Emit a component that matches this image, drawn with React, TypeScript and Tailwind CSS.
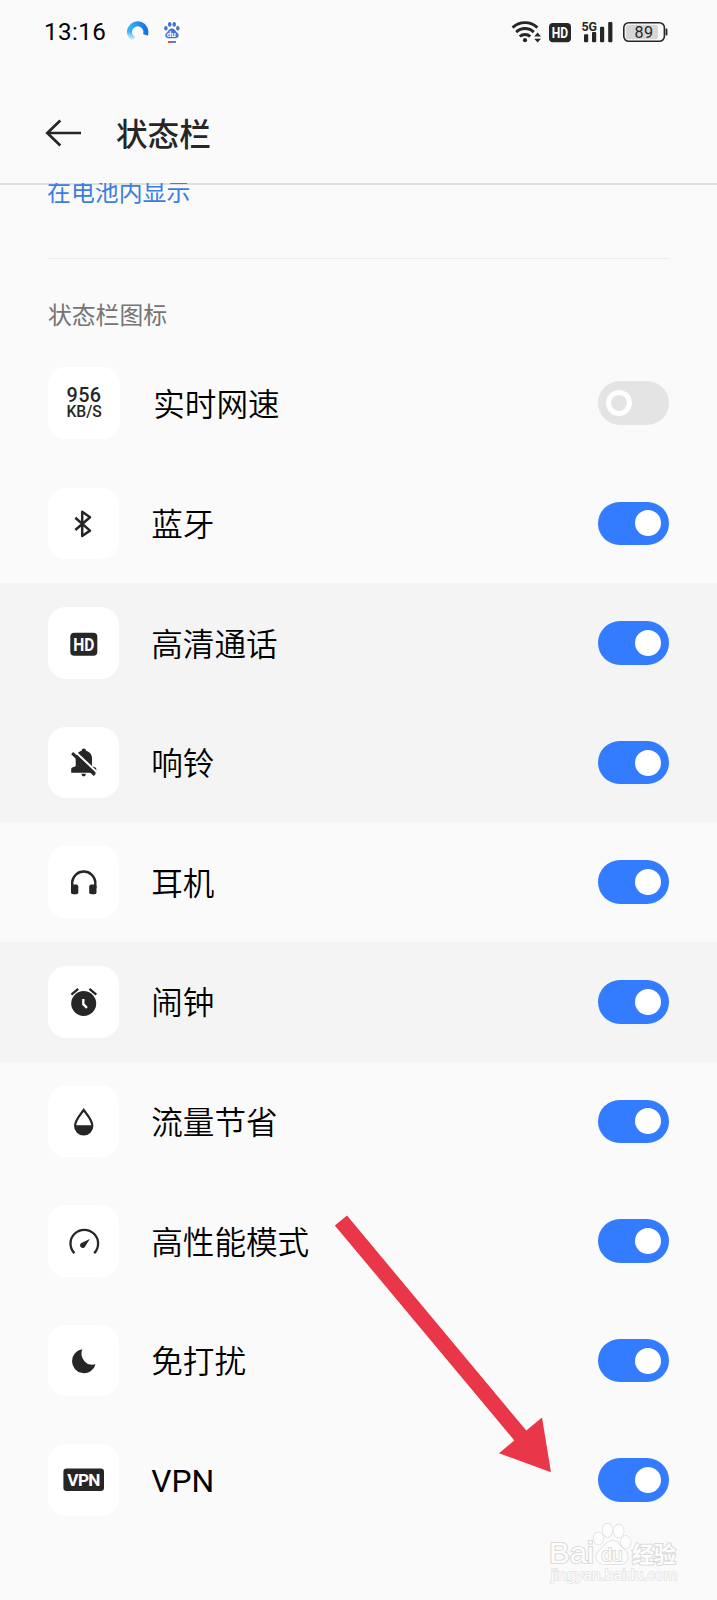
import React from "react";

const INK = "#262626";
const FONT = "font-['Roboto','Noto_Sans_CJK_SC',sans-serif]";

function Tile({ children }: { children: React.ReactNode }) {
  return (
    <div className="size-[71.5px] shrink-0 rounded-[18px] bg-white">
      <svg viewBox="0 0 71.5 71.5" className="size-full" fill={INK}>
        {children}
      </svg>
    </div>
  );
}

const stroke = { fill: "none", stroke: INK } as const;

const items = [
  {
    label: "实时网速",
    on: false,
    icon: (
      <g fontFamily="Roboto" fontWeight="500">
        <text x="18.6" y="35.2" fontSize="19.8" textLength="34.4">956</text>
        <text x="18.4" y="50.3" fontSize="15.8" textLength="35.4" lengthAdjust="spacingAndGlyphs">KB/S</text>
      </g>
    ),
  },
  {
    label: "蓝牙",
    on: true,
    icon: <path d="M27.3 29.8 L42 42.6 L34.2 48 V23.8 L42 29.2 L27.3 42" {...stroke} strokeWidth="2.5" strokeLinejoin="round" />,
  },
  {
    label: "高清通话",
    on: true,
    icon: (
      <>
        <rect x="22.3" y="25.7" width="27" height="23" rx="4" />
        <text x="25.3" y="43.6" fontSize="18.2" fontFamily="Roboto" fontWeight="700" fill="#fff" textLength="21.2" lengthAdjust="spacingAndGlyphs">HD</text>
      </>
    ),
  },
  {
    label: "响铃",
    on: true,
    icon: (
      <>
        <path d="M33.6 23.8 a2.2 2.2 0 0 1 4.4 0 C42 24.8 44 28 44 31.5 V39.2 L47.5 40.5 Q48.3 41 48.3 42 V45.7 H23.2 V42 Q23.2 40.8 24.2 40.4 L27.7 39.2 V31.5 C27.7 28 29.8 24.8 33.6 23.8Z" />
        <path d="M33.3 46.8 H38 Q37.6 49.4 35.7 49.4 Q33.8 49.4 33.3 46.8Z" />
        <path d="M25.4 23 L49 45.2" stroke="#fff" strokeWidth="2" />
        <path d="M24.2 26.2 L46.8 47.8" stroke={INK} strokeWidth="3" />
      </>
    ),
  },
  {
    label: "耳机",
    on: true,
    icon: (
      <>
        <path d="M24.2 42 V35.9 a11.6 11.4 0 0 1 23.1 0 V42" {...stroke} strokeWidth="2.4" />
        <rect x="23" y="38.5" width="7.3" height="9.8" rx="2" />
        <rect x="41.2" y="38.5" width="7.3" height="9.8" rx="2" />
      </>
    ),
  },
  {
    label: "闹钟",
    on: true,
    icon: (
      <>
        <circle cx="35.7" cy="37.5" r="12.5" />
        <path d="M35.3 33 V38.2 L39 41.8" fill="none" stroke="#fff" strokeWidth="2.4" />
        <path d="M23.4 28.6 L30.2 22.9 M41.4 22.9 L48.3 28.6" {...stroke} strokeWidth="2.4" />
      </>
    ),
  },
  {
    label: "流量节省",
    on: true,
    icon: (
      <>
        <path d="M35.7 24 C32 29.2 27.1 34 27.1 39.8 a8.6 8.6 0 0 0 17.2 0 C44.3 34 39.4 29.2 35.7 24Z" {...stroke} strokeWidth="2.2" />
        <path d="M27 39.3 H44.5 a8.7 9 0 0 1 -17.5 0Z" />
      </>
    ),
  },
  {
    label: "高性能模式",
    on: true,
    icon: (
      <>
        <path d="M26.4 48.2 a13.8 13.8 0 1 1 19.8 0" {...stroke} strokeWidth="2.3" />
        <path d="M41.8 34.1 L37.2 41.4 A2.7 2.7 0 1 1 33.4 38Z" />
      </>
    ),
  },
  {
    label: "免打扰",
    on: true,
    icon: <path d="M34.3 24.3 A12 12 0 1 0 47.6 39.3 A11.2 11.2 0 0 1 34.3 24.3Z" />,
  },
  {
    label: "VPN",
    on: true,
    icon: (
      <>
        <rect x="15.4" y="24.4" width="40.6" height="22.6" rx="3.3" />
        <text x="19.3" y="42.1" fontSize="17.2" fontFamily="Roboto" fontWeight="700" fill="#fff" textLength="33.2">VPN</text>
      </>
    ),
  },
];

// rows that are tinted in the list
const tinted = ["高清通话", "响铃", "闹钟"];

function Switch({ on }: { on: boolean }) {
  return on ? (
    <div className="flex h-[43.6px] w-[71.8px] items-center justify-end rounded-full bg-[#337cff] pr-[8.5px]">
      <div className="size-[26px] rounded-full bg-white" />
    </div>
  ) : (
    <div className="flex h-[43.6px] w-[71.8px] items-center rounded-full bg-[#e4e4e4] pl-[8.5px]">
      <div className="size-[26px] rounded-full border-[5.3px] border-white" />
    </div>
  );
}

function StatusBar() {
  return (
    <div className="flex h-16 items-center pl-[44px] pr-[49px]">
      <span className="w-16 whitespace-nowrap text-[24.2px] font-[450] leading-8 tracking-[0.4px]">13:16</span>
      <svg width="24" height="24" viewBox="125 20 24 24" className="ml-[17px] shrink-0">
        <defs>
          <linearGradient id="ring" x1="0" y1="0" x2="1" y2="0">
            <stop offset="0" stopColor="#35b4f2" />
            <stop offset="1" stopColor="#1673e0" />
          </linearGradient>
          <linearGradient id="fade" x1="0" y1="0" x2="0" y2="1">
            <stop offset="0.5" stopColor="#fafafa" stopOpacity="0" />
            <stop offset="0.95" stopColor="#fafafa" />
          </linearGradient>
        </defs>
        <path d="M134 39.3 A8.2 8.2 0 1 1 145.4 34.8" fill="none" stroke="url(#ring)" strokeWidth="5" />
        <rect x="125" y="20" width="15" height="22" fill="url(#fade)" />
      </svg>
      <svg width="18" height="24" viewBox="163 21 18 24" className="ml-[14px] shrink-0" fill="#4672d2">
        <rect x="163" y="21" width="18" height="24" fill="#fff" rx="3" />
        <ellipse cx="165.9" cy="29.2" rx="1.7" ry="2.3" />
        <ellipse cx="169.7" cy="25.4" rx="1.8" ry="2.4" />
        <ellipse cx="174.2" cy="25.4" rx="1.8" ry="2.4" />
        <ellipse cx="177.8" cy="29.2" rx="1.7" ry="2.3" />
        <path d="M172 29.4 C175 29.4 175.6 32.4 177.3 33.8 C180 36.2 178.4 39.2 175.6 39.2 H168.2 C165.2 39.2 164.2 36 166.5 33.8 C168.4 32.2 169 29.4 172 29.4Z" />
        <text x="166.8" y="38" fontSize="8" fontWeight="700" fontFamily="Roboto" fill="#fff">du</text>
        <path d="M168 43 H172" stroke="#d83a35" strokeWidth="1.8" />
        <path d="M172 43 H176" stroke="#4672d2" strokeWidth="1.8" />
      </svg>

      <div className="ml-auto flex items-center">
        <svg width="31" height="24" viewBox="511 20 31 24" fill={INK}>
          <g fill="none" stroke={INK} strokeWidth="2.9">
            <path d="M512.6 27.6 A18 18 0 0 1 537.4 27.6" />
            <path d="M516.2 32.1 A12.6 12.6 0 0 1 533.8 32.1" />
            <path d="M519.8 36.5 A7.6 7.6 0 0 1 530.2 36.5" />
          </g>
          <circle cx="525" cy="40.2" r="2.1" />
          <path d="M537.6 32.6 L541 36.4 H534.2Z M537.6 42.4 L541 38.8 H534.2Z" />
        </svg>
        <svg width="22" height="24" viewBox="549 20 22 24" className="ml-[7px]">
          <rect x="549" y="23" width="22" height="19.2" rx="4" fill={INK} />
          <text x="551.8" y="38" fontSize="14.6" fontFamily="Roboto" fontWeight="700" fill="#fff" textLength="16.4" lengthAdjust="spacingAndGlyphs">HD</text>
        </svg>
        <svg width="32" height="26" viewBox="581 19 32 26" className="ml-[10px]" fill={INK}>
          <text x="581.4" y="31" fontSize="13.4" fontFamily="Roboto" fontWeight="700" textLength="15.6" lengthAdjust="spacingAndGlyphs">5G</text>
          <rect x="584" y="34.2" width="4.2" height="8" rx="1" />
          <rect x="592" y="32" width="4.2" height="10.2" rx="1" />
          <rect x="600" y="26.7" width="4.2" height="15.5" rx="1" />
          <rect x="608.2" y="22" width="4.2" height="20.2" rx="1" />
        </svg>
        <svg width="45" height="24" viewBox="623 20 45 24" className="ml-[10px]">
          <rect x="623.8" y="22.7" width="40.6" height="18.6" rx="5" fill="none" stroke={INK} strokeWidth="1.6" />
          <rect x="626" y="24.8" width="32" height="14.4" rx="2.5" fill="#d6d6d6" />
          <rect x="665.6" y="28.6" width="1.8" height="7" rx="0.8" fill={INK} />
          <text x="634.4" y="38" fontSize="16.2" fontFamily="Roboto" fill={INK} textLength="18.6">89</text>
        </svg>
      </div>
    </div>
  );
}

function Watermark() {
  return (
    <svg className="absolute left-[545px] top-[1518px]" width="140" height="70" viewBox="545 1518 140 70" fill="#fdfdfd" stroke="#dadada" strokeWidth="1.3" paintOrder="stroke">
      <g fontFamily="Liberation Sans, Noto Sans CJK SC" fontWeight="700" strokeWidth="2">
        <text x="549" y="1563" fontSize="29" fontWeight="400" textLength="45" lengthAdjust="spacingAndGlyphs">Bai</text>
        <text x="632" y="1561.5" fontSize="22" textLength="44">经验</text>
      </g>
      <ellipse cx="598.3" cy="1538.5" rx="4.8" ry="6.2" />
      <ellipse cx="607.5" cy="1530.3" rx="5" ry="6.8" />
      <ellipse cx="618.8" cy="1531" rx="5" ry="6.6" />
      <ellipse cx="625.8" cy="1542" rx="5" ry="6.2" />
      <path d="M612.5 1541 C618 1541 620 1546 624 1549.5 C631 1556 627.5 1564 620 1564 H605 C596 1564 593.5 1556 599.5 1550.5 C604.5 1546 607 1541 612.5 1541Z" />
      <text x="601.5" y="1560.5" fontSize="19" fontFamily="Liberation Sans" strokeWidth="1.8" textLength="21">du</text>
      <text x="551" y="1580" fontSize="15" fontFamily="Liberation Sans" strokeWidth="1.4" stroke="#e2e2e2" textLength="126" lengthAdjust="spacingAndGlyphs">jingyan.baidu.com</text>
    </svg>
  );
}

export default function App() {
  return (
    <div className={`relative h-[1600px] w-[717px] overflow-hidden bg-[#fafafa] text-black ${FONT}`}>
      <header className="h-[184.5px] border-b-2 border-[#dfdfdf]">
        <StatusBar />
        <div className="flex h-[138px] items-center pl-[45px]">
          <svg width="36" height="28" viewBox="0 0 36 28" fill="none" stroke={INK} strokeWidth="2.7">
            <path d="M15.3 1.6 L2.3 14 L15.3 26.4 M2.3 14 H36" />
          </svg>
          <h1 className="ml-[35px] pt-[5px] text-[31.6px] font-medium leading-none text-[#262626]">状态栏</h1>
        </div>
      </header>

      <section className="relative mx-12 -mt-[2px] h-[76.5px] border-b border-[#ececec]">
        <div className="-ml-px h-10 overflow-hidden">
          <p className="-mt-[2px] text-[23.9px] leading-6 text-[#3d7de0]">在电池内显示</p>
        </div>
      </section>

      <h2 className="flex h-[84px] items-center pl-12 pt-[32px] text-[23.8px] leading-none text-[#757575]">
        状态栏图标
      </h2>

      <ul>
        {items.map((item) => (
          <li
            key={item.label}
            className={`flex h-[119.6px] items-center pl-[47.7px] pr-[47.7px] first:mb-[1px] first:pl-[48.2px] ${
              tinted.includes(item.label) ? "bg-[#f4f4f4]" : ""
            }`}
          >
            <Tile>{item.icon}</Tile>
            <span
              className={`leading-none ${item.on ? "ml-8" : "ml-[33.5px]"} ${
                item.label === "VPN" ? "pt-[3px] text-[31.8px] font-normal" : "pt-[5px] text-[31.6px] font-[350]"
              }`}
            >
              {item.label}
            </span>
            <div className="ml-auto">
              <Switch on={item.on} />
            </div>
          </li>
        ))}
      </ul>

      <svg className="absolute left-[330px] top-[1210px]" width="230" height="270" viewBox="330 1210 230 270">
        <path d="M334.8 1225.4 L347 1215.6 L526.3 1430.6 L542 1417.5 L551 1472.3 L499 1453.2 L514.3 1440.4Z" fill="#e93649" />
      </svg>

      <Watermark />
    </div>
  );
}
